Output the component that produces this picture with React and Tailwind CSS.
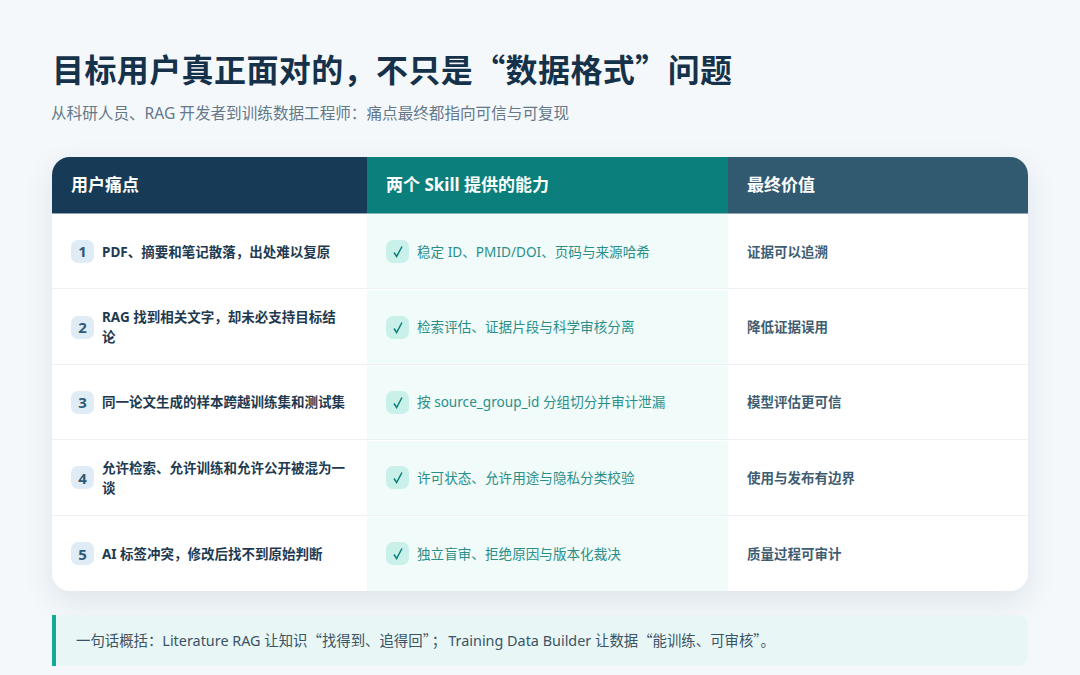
import React from 'react';

const rows = [
  { pain: 'PDF、摘要和笔记散落，出处难以复原', skill: '稳定 ID、PMID/DOI、页码与来源哈希', value: '证据可以追溯' },
  { pain: 'RAG 找到相关文字，却未必支持目标结论', skill: '检索评估、证据片段与科学审核分离', value: '降低证据误用' },
  { pain: '同一论文生成的样本跨越训练集和测试集', skill: '按 source_group_id 分组切分并审计泄漏', value: '模型评估更可信' },
  { pain: '允许检索、允许训练和允许公开被混为一谈', skill: '许可状态、允许用途与隐私分类校验', value: '使用与发布有边界' },
  { pain: 'AI 标签冲突，修改后找不到原始判断', skill: '独立盲审、拒绝原因与版本化裁决', value: '质量过程可审计' },
];

// Chinese punctuation needs the CJK font, otherwise it comes out narrow
const Cjk = ({ children }) => <span className="font-['Noto_Sans_CJK_SC',sans-serif]">{children}</span>;

const App = () => {
  return (
    <div className="w-[1080px] h-[675px] overflow-hidden bg-[#f4f8fb] px-[52px] pt-[47px] font-['Noto_Sans','Noto_Sans_CJK_SC',sans-serif]">
      <h1 className="h-[46px] text-[32px] leading-[42px] font-bold tracking-[0.4px] text-[#16324a]">
        目标用户真正面对的，不只是<Cjk>“</Cjk>数据格式<Cjk>”</Cjk>问题
      </h1>
      <p className="h-[24px] mt-[8px] -ml-px text-[15.6px] leading-[24px] text-[#64788a]">从科研人员、RAG 开发者到训练数据工程师：痛点最终都指向可信与可复现</p>

      <div className="mt-[32px] rounded-[18px] overflow-hidden bg-white shadow-[0_10px_30px_rgba(22,50,74,0.1)]">
        {/* Header */}
        <div className="grid grid-cols-[315px_361px_300px] h-[57px] text-white text-[17px] font-bold">
          <div className="flex items-center px-[19px] bg-[#173a56] border-b border-[#8ea3b5]">用户痛点</div>
          <div className="flex items-center px-[19px] bg-[#0b7f7c] border-b border-[#7fb8b6]">两个 Skill 提供的能力</div>
          <div className="flex items-center px-[19px] bg-[#31596f] border-b border-[#8ea3b5]">最终价值</div>
        </div>

        {rows.map((row, i) => (
          <div key={i} className={`grid grid-cols-[315px_361px_300px] h-[75.4px] pt-px ${i < 4 ? 'border-b border-[#edf1f4]' : ''}`}>
            <div className="flex items-center gap-[8px] pl-[19px] pr-[20px]">
              <span className="shrink-0 w-[23px] h-[23px] rounded-[7px] bg-[#dfebf5] text-[#2f5a78] text-[15px] font-bold flex items-center justify-center">{i + 1}</span>
              <span className="text-[13.5px] leading-[20px] font-bold text-[#1f3a50]">{row.pain}</span>
            </div>
            <div className="flex items-center gap-[8px] px-[19px] bg-[#f1fbf9]">
              <span className="shrink-0 w-[23px] h-[23px] rounded-[7px] bg-[#c9f1ea] flex items-center justify-center">
                <svg width="12" height="13" viewBox="0 0 12 13" fill="none" stroke="#0b7f7c" strokeWidth="1.5">
                  <path d="M2 7.5 L4.6 11.5 L10 1.5" />
                </svg>
              </span>
              <span className="text-[13.6px] leading-[20px] text-[#2a8f8a]">{row.skill}</span>
            </div>
            <div className="flex items-center px-[19px] text-[13.5px] font-bold text-[#3f5d72]">{row.value}</div>
          </div>
        ))}
      </div>

      <div className="mt-[24px] h-[51px] flex items-center pl-[20px] border-l-[4px] border-[#11ab9b] bg-[#e8f6f5] rounded-r-[10px] text-[14.4px] text-[#3a5366]">
        <span className="h-[22px] leading-[22px]">一句话概括：Literature RAG 让知识<Cjk>“</Cjk>找得到、追得回<Cjk>”</Cjk><span className="mx-[2px]"><Cjk>；</Cjk></span>Training Data Builder 让数据<Cjk>“</Cjk>能训练、可审核<Cjk>”</Cjk>。</span>
      </div>
    </div>
  );
};

export default App;
